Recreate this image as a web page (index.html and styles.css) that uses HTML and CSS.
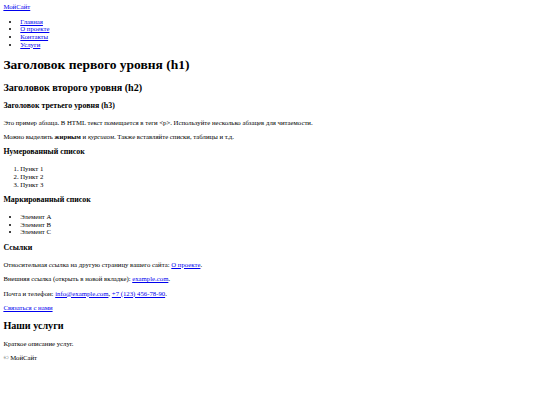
FILE: index.html
```html
<!DOCTYPE html>
<html lang="ru">
<head>
<meta charset="utf-8">
<title>МойСайт</title>
<link rel="stylesheet" href="styles.css">
</head>
<body class="body">
<header class="site-header">
  <a href="#">МойСайт</a>
  <nav>
    <ul class="list">
      <li><a href="#">Главная</a></li>
      <li><a href="#">О проекте</a></li>
      <li><a href="#">Контакты</a></li>
      <li><a href="#">Услуги</a></li>
    </ul>
  </nav>
</header>
<main>
  <h1 class="h1">Заголовок первого уровня (h1)</h1>
  <h2 class="h2">Заголовок второго уровня (h2)</h2>
  <h3 class="h3">Заголовок третьего уровня (h3)</h3>
  <p class="p">Это пример абзаца. В HTML текст помещается в теги &lt;p&gt;. Используйте несколько абзацев для читаемости.</p>
  <p class="p">Можно выделить <strong>жирным</strong> и <em>курсивом</em>. Также вставляйте списки, таблицы и т.д.</p>
  <h3 class="h3">Нумерованный список</h3>
  <ol class="list">
    <li>Пункт 1</li>
    <li>Пункт 2</li>
    <li>Пункт 3</li>
  </ol>
  <h3 class="h3">Маркированный список</h3>
  <ul class="list">
    <li>Элемент A</li>
    <li>Элемент B</li>
    <li>Элемент C</li>
  </ul>
  <h3 class="h3">Ссылки</h3>
  <p class="p">Относительная ссылка на другую страницу вашего сайта: <a href="#">О проекте</a>.</p>
  <p class="p">Внешняя ссылка (открыть в новой вкладке): <a href="#">example.com</a>.</p>
  <p class="p">Почта и телефон: <a href="#">info@example.com</a>, <a href="#">+7 (123) 456-78-90</a>.</p>
  <p class="p"><a href="#">Связаться с нами</a></p>
  <h2 class="h2">Наши услуги</h2>
  <p class="p">Краткое описание услуг.</p>
</main>
<footer>
  <p class="p">© МойСайт</p>
</footer>
</body>
</html>
```

FILE: styles.css
```css
.body {
  margin: 3.375px;
  font-family: "Liberation Serif", serif;
  font-size: 6.75px;
  line-height: 1.135;
  color: #000;
}
.list {
  margin: 1em 0;
  padding-left: 16.875px;
}
.h1 {
  font-size: 2em;
  margin: 0.67em 0;
}
.h2 {
  font-size: 1.5em;
  margin: 0.83em 0;
}
.h3 {
  font-size: 1.17em;
  margin: 1em 0;
}
.p {
  margin: 1em 0;
}
```
